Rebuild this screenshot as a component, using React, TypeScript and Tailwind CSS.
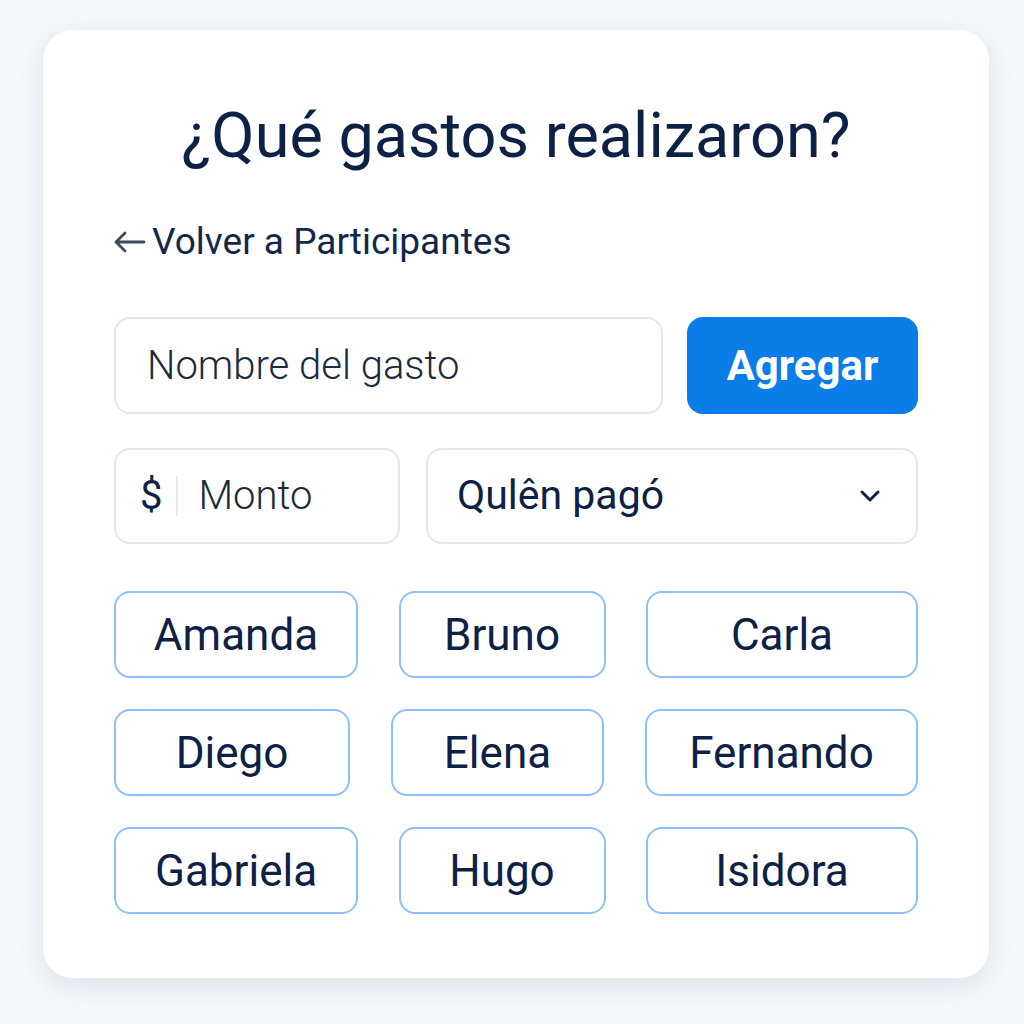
import React from "react";

const chips: { name: string; w: string }[][] = [
  [
    { name: "Amanda", w: "w-[244px]" },
    { name: "Bruno", w: "w-[207px]" },
    { name: "Carla", w: "w-[272px]" },
  ],
  [
    { name: "Diego", w: "w-[236px]" },
    { name: "Elena", w: "w-[213px]" },
    { name: "Fernando", w: "w-[273px]" },
  ],
  [
    { name: "Gabriela", w: "w-[244px]" },
    { name: "Hugo", w: "w-[207px]" },
    { name: "Isidora", w: "w-[272px]" },
  ],
];

export default function App() {
  return (
    <div
      className="min-h-[1024px] w-[1024px] bg-[#f4f7fb] pt-[30px] pl-[43px]"
      style={{ fontFamily: "Roboto, 'Liberation Sans', sans-serif" }}
    >
      <div className="w-[946px] h-[948px] rounded-[30px] bg-white shadow-[0_8px_30px_rgba(30,50,90,0.10)] px-[71px] pt-[72px] text-[#0d2146]">
        <h1 className="text-center text-[63px] leading-[68px] font-normal">
          ¿Qué gastos realizaron?
        </h1>
        <div className="mt-[50px] flex items-center gap-[6px] text-[37px] leading-[44px] text-[#13274c]">
          <svg width="34" height="26" viewBox="0 0 34 26" fill="none" className="-ml-[2px]">
            <path d="M32 13H4M13 4L4 13l9 9" stroke="#3b4a60" strokeWidth="2.8" strokeLinecap="round" strokeLinejoin="round" />
          </svg>
          <span>Volver a Participantes</span>
        </div>
        <div className="mt-[53px] flex gap-[24px]">
          <div className="w-[549px] h-[97px] rounded-[16px] border-2 border-[#e3e8ee] flex items-center pl-[31px] text-[40px] font-light text-[#1c2a3d]">
            Nombre del gasto
          </div>
          <button className="w-[231px] h-[97px] rounded-[16px] bg-[#0a7de8] text-white text-[42px] font-bold flex items-center justify-center">
            Agregar
          </button>
        </div>
        <div className="mt-[34px] flex gap-[26px]">
          <div className="w-[286px] h-[96px] rounded-[16px] border-2 border-[#e3e8ee] flex items-center pl-[24px] text-[40px]">
            <span className="text-[#0d2146] font-normal">$</span>
            <span className="ml-[14px] w-[2px] h-[40px] bg-[#e6eaef]"></span>
            <span className="ml-[20px] font-light text-[#1c2a3d]">Monto</span>
          </div>
          <div className="w-[492px] h-[96px] rounded-[16px] border-2 border-[#e3e8ee] flex items-center justify-between pl-[29px] pr-[34px] text-[41px] font-normal text-[#0d2146]">
            <span>Qulên pagó</span>
            <svg width="24" height="16" viewBox="0 0 24 16" fill="none">
              <path d="M4 4l8 8 8-8" stroke="#0d2146" strokeWidth="3" strokeLinecap="round" strokeLinejoin="round" />
            </svg>
          </div>
        </div>
        <div className="mt-[47px] flex flex-col gap-[31px]">
          {chips.map((row, i) => (
            <div key={i} className="flex justify-between">
              {row.map((c) => (
                <div
                  key={c.name}
                  className={`${c.w} h-[87px] rounded-[16px] border-2 border-[#8fc0fb] flex items-center justify-center text-[44px] font-[450] text-[#0d2146]`}
                >
                  {c.name}
                </div>
              ))}
            </div>
          ))}
        </div>
      </div>
    </div>
  );
}
